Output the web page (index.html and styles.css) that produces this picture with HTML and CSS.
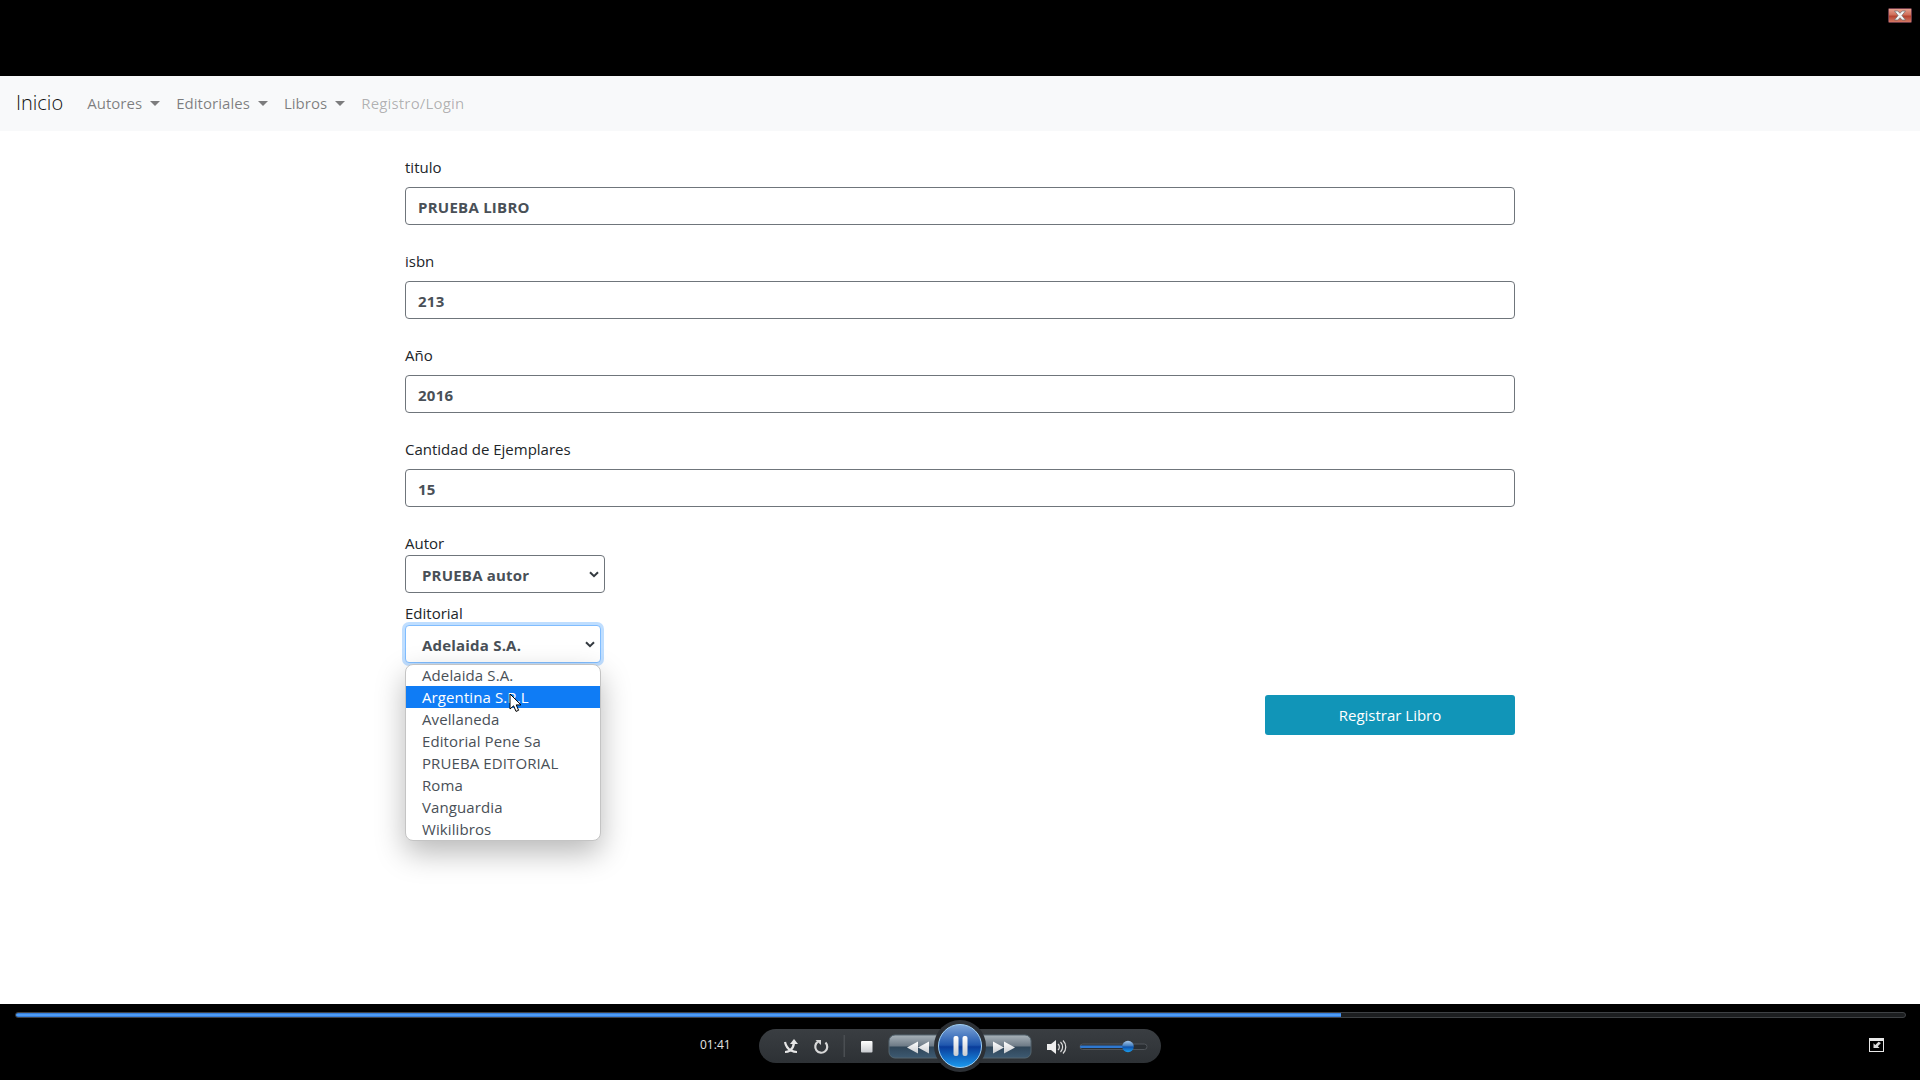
FILE: index.html
```html
<!DOCTYPE html>
<html lang="es">
<head>
<meta charset="utf-8">
<title>Registrar Libro</title>
<link rel="stylesheet" href="styles.css">
</head>
<body>
<div class="screen">
  <header class="video-top">
    <svg class="close-icon" width="24" height="15" viewBox="0 0 24 15">
      <defs><linearGradient id="cg" x1="0" y1="0" x2="0" y2="1"><stop offset="0" stop-color="#e8a392"/><stop offset=".45" stop-color="#cf6f5a"/><stop offset=".55" stop-color="#b5432f"/><stop offset="1" stop-color="#d67d69"/></linearGradient></defs>
      <rect x=".5" y=".5" width="23" height="14" rx="1" fill="url(#cg)" stroke="#6d3b48"/>
      <path d="M6.500 3h3.300L12 5.300 14.200 3h3.300l-3.600 4.500 3.600 4.500h-3.300L12 9.700 9.800 12H6.500l3.600-4.500z" fill="#f4f4f4" stroke="#6f6a68" stroke-width=".7"/>
    </svg>
  </header>

  <nav class="navbar">
    <a class="brand">Inicio</a>
    <a class="nav-link caret">Autores</a>
    <a class="nav-link caret">Editoriales</a>
    <a class="nav-link caret">Libros</a>
    <a class="nav-link disabled">Registro/Login</a>
  </nav>

  <main class="content">
    <div class="container">
      <div class="group"><div class="label">titulo</div><div class="input">PRUEBA LIBRO</div></div>
      <div class="group"><div class="label">isbn</div><div class="input">213</div></div>
      <div class="group"><div class="label">Año</div><div class="input">2016</div></div>
      <div class="group"><div class="label">Cantidad de Ejemplares</div><div class="input">15</div></div>

      <div class="label">Autor</div>
      <div class="select select-autor">
        <span>PRUEBA autor</span>
        <svg class="chevron" width="10" height="7" viewBox="0 0 10 7"><path d="M1 1.200l4 4 4-4" fill="none" stroke="#343a40" stroke-width="2"/></svg>
      </div>

      <div class="label">Editorial</div>
      <div class="select-wrap">
        <div class="select select-editorial">
          <span>Adelaida S.A.</span>
          <svg class="chevron" width="10" height="7" viewBox="0 0 10 7"><path d="M1 1.200l4 4 4-4" fill="none" stroke="#343a40" stroke-width="2"/></svg>
        </div>
        <ul class="menu">
          <li>Adelaida S.A.</li>
          <li class="active">Argentina S.R.L</li>
          <li>Avellaneda</li>
          <li>Editorial Pene Sa</li>
          <li>PRUEBA EDITORIAL</li>
          <li>Roma</li>
          <li>Vanguardia</li>
          <li>Wikilibros</li>
        </ul>
        <svg class="cursor" width="14" height="20" viewBox="0 0 14 20"><path d="M1 1v15l3.600-3.200 2.400 5.600 2.600-1.100-2.400-5.400H12z" fill="#fff" stroke="#000" stroke-width="1"/></svg>
      </div>

      <div class="actions"><button class="btn">Registrar Libro</button></div>
    </div>
  </main>

  <footer class="player">
    <div class="seek"><div class="seek-fill"></div></div>
    <div class="controls">
      <span class="time">01:41</span>
      <svg class="transport" width="440" height="60" viewBox="740 1020 440 60">
        <defs>
          <linearGradient id="pill" x1="0" y1="0" x2="0" y2="1"><stop offset="0" stop-color="#3a3e42"/><stop offset="1" stop-color="#2d3135"/></linearGradient>
          <linearGradient id="pb" x1="0" y1="0" x2="0" y2="1"><stop offset="0" stop-color="#a9b3ba"/><stop offset=".48" stop-color="#6d7a86"/><stop offset=".52" stop-color="#2f4558"/><stop offset="1" stop-color="#3d5a72"/></linearGradient>
          <linearGradient id="blue" x1="0" y1="0" x2="0" y2="1"><stop offset="0" stop-color="#7fa6d8"/><stop offset=".48" stop-color="#1f57ae"/><stop offset=".52" stop-color="#0a3c9a"/><stop offset="1" stop-color="#1b9bf0"/></linearGradient>
          <linearGradient id="thumb" x1="0" y1="0" x2="0" y2="1"><stop offset="0" stop-color="#a8c8ea"/><stop offset=".48" stop-color="#3a78bc"/><stop offset=".52" stop-color="#0d4ea8"/><stop offset="1" stop-color="#1ba0f0"/></linearGradient>
          <linearGradient id="wh" x1="0" y1="0" x2="0" y2="1"><stop offset="0" stop-color="#fff"/><stop offset="1" stop-color="#c9ccd0"/></linearGradient>
        </defs>
        <rect x="759" y="1029" width="402" height="34" rx="17" fill="url(#pill)"/>
        <!-- shuffle -->
        <path d="M785 1042c1 5 3 7 6 8.500 2 1 4 1.500 6 1.500M794 1043c-.500 4-2 6-4 7.500-1.500 1-3 1.500-5 1.500" fill="none" stroke="#e6e6e6" stroke-width="2.200"/>
        <path d="M790 1044l4-5 4 5z" fill="#e6e6e6"/>
        <!-- repeat -->
        <path d="M825.500 1042.500a6 6 0 1 1-7.500-.8" fill="none" stroke="#d8d8d8" stroke-width="2.200"/>
        <path d="M815.500 1040h5.500v5z" fill="#d8d8d8"/>
        <rect x="843.500" y="1035" width="1.500" height="22" fill="#4a4e52"/>
        <rect x="861" y="1041" width="11.500" height="11.500" rx="1" fill="url(#wh)"/>
        <!-- rewind / forward -->
        <path d="M895 1035h50v23h-50a6 6 0 0 1-6-6v-11a6 6 0 0 1 6-6z" fill="url(#pb)" stroke="#54656f"/>
        <path d="M975 1035h50a6 6 0 0 1 6 6v11a6 6 0 0 1-6 6h-50z" fill="url(#pb)" stroke="#54656f"/>
        <path d="M907 1047.500l11-6v12zM918 1047.500l11-6v12z" fill="url(#wh)"/>
        <path d="M993 1041.500l11 6-11 6zM1004 1041.500l11 6-11 6z" fill="url(#wh)"/>
        <!-- play/pause -->
        <circle cx="960" cy="1046" r="26" fill="#2c3035"/>
        <circle cx="960" cy="1046" r="21.500" fill="url(#blue)" stroke="#9fd0f5" stroke-width="1"/>
        <rect x="953.500" y="1036" width="5" height="20" rx="2" fill="url(#wh)"/>
        <rect x="962.500" y="1036" width="5" height="20" rx="2" fill="url(#wh)"/>
        <!-- speaker -->
        <path d="M1047 1044h4l5-4v14l-5-4h-4z" fill="#eee"/>
        <path d="M1058 1044a4 4 0 0 1 0 6M1060.500 1042a7 7 0 0 1 0 10M1063 1040.500a9 9 0 0 1 0 13" fill="none" stroke="#ddd" stroke-width="1.200"/>
        <!-- volume -->
        <rect x="1080" y="1044" width="67" height="5.500" rx="2.700" fill="#2a2e32" stroke="#50555a"/>
        <rect x="1080" y="1045.500" width="48" height="2.500" rx="1.200" fill="#2f78d0"/>
        <circle cx="1128" cy="1046.500" r="5.800" fill="url(#thumb)"/>
      </svg>
      <svg class="fs-icon" width="16" height="15" viewBox="0 0 16 15">
        <rect x=".5" y=".5" width="14" height="13" fill="none" stroke="#e8e8e8"/>
        <path d="M1 1h13v2H1z" fill="#e8e8e8"/>
        <path d="M12 5l-3.200 3.200 1.800 1.800H4.500V5.200l1.800 1.700L9.500 3.800z" fill="#dcdcdc"/>
      </svg>
    </div>
  </footer>
</div>
</body>
</html>
```
FILE: styles.css
```css
* { box-sizing: border-box; }
html, body { margin: 0; padding: 0; }
body { font-family: "Open Sans", "Noto Sans", "Liberation Sans", sans-serif; font-size: 15px; color: #212529; background: #000; }
.screen { width: 1920px; height: 1080px; display: flex; flex-direction: column; overflow: hidden; }

.video-top { height: 76px; background: #000; display: flex; justify-content: flex-end; align-items: flex-start; padding: 8px 8px 0 0; }
.close-icon { display: block; }

.navbar { height: 55px; background: #f8f9fa; display: flex; align-items: center; padding: 0 16px 2px; }
.brand { font-size: 20px; font-weight: 300; color: #111; margin-right: 16px; line-height: 30px; }
.nav-link { padding: 8px; color: rgba(0,0,0,.5); line-height: 24px; letter-spacing: .04px; }
.nav-link.disabled { color: rgba(0,0,0,.3); letter-spacing: .17px; }
.caret::after { content: ""; display: inline-block; margin-left: 8px; vertical-align: 3px; border-top: 5px solid; border-left: 5px solid transparent; border-right: 5px solid transparent; }

.content { flex: 1; background: #fff; padding-top: 24px; }
.container { width: 1110px; margin: 0 auto; }
.group { margin-bottom: 24px; }
.group .label { margin-bottom: 8px; }
.label { line-height: 24px; height: 24px; }
.input { height: 38px; border: 1px solid #6f757b; border-radius: 4px; padding: 1px 12px 0; line-height: 36px; font-weight: 700; letter-spacing: .25px; color: #495057; background: #fff; }

.select { height: 38px; border: 1px solid #6f757b; border-radius: 4px; padding: 1px 5px 0 16px; display: flex; align-items: center; justify-content: space-between; font-weight: 700; letter-spacing: .2px; color: #495057; background: #fff; }
.select-autor { width: 200px; margin-bottom: 8px; }
.select-wrap { position: relative; width: 196px; }
.select-editorial { width: 196px; border-color: #80bdff; box-shadow: 0 0 0 3px rgba(0,123,255,.25); }
.chevron { flex: none; margin-top: -1px; }

.menu { position: absolute; z-index: 5; left: 0; top: 39px; width: 196px; margin: 0; padding: 0; list-style: none; background: #fff; border: 1px solid #c4c4c4; border-radius: 8px; overflow: hidden; box-shadow: 0 12px 30px rgba(0,0,0,.28); color: #495057; letter-spacing: .1px; }
.menu li { height: 22px; line-height: 22px; padding-left: 16px; }
.menu li:first-child { height: 21px; line-height: 20px; }
.menu li:last-child { height: 22px; }
.menu li.active { background: #0f7cf5; color: #fff; }
.cursor { position: absolute; z-index: 6; left: 104px; top: 68px; }

.actions { display: flex; justify-content: flex-end; margin-top: 32px; }
.btn { width: 250px; height: 40px; border: 0; border-radius: 3px; background: #1195b8; color: #fff; font: inherit; }

.player { height: 76px; background: #000; display: flex; flex-direction: column; padding-top: 8px; }
.seek { height: 6px; margin: 0 14px 0 15px; background: #1c1e20; border: 1px solid #3e4144; border-radius: 3px; overflow: hidden; }
.seek-fill { width: 1325px; height: 100%; background: linear-gradient(#2a6fd0, #5aaaff, #2a6fd0); }
.controls { display: flex; align-items: flex-start; height: 60px; margin-top: 2px; position: relative; }
.time { width: 40px; margin: 17px 0 0 700px; font-size: 12px; line-height: 16px; color: #e4e4e4; }
.transport { display: block; flex: none; }
.fs-icon { margin: 18px 0 0 689px; display: block; flex: none; }
```
